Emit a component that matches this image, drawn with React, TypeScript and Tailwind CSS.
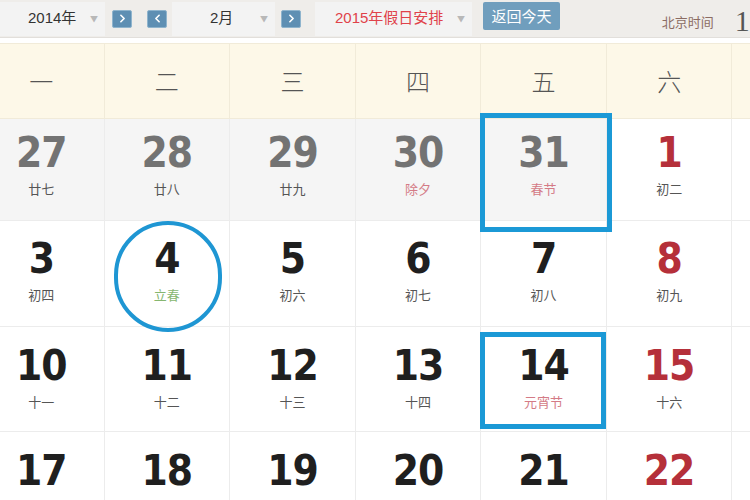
import { ChevronLeft, ChevronRight } from 'lucide-react';

type Day = {
  n: number;
  lunar: string;
  prev?: boolean;
  red?: boolean;
  fest?: 'red' | 'green';
  mark?: 'box' | 'boxLow' | 'circle';
};

const weeks: Day[][] = [
  [
    { n: 27, lunar: '廿七', prev: true },
    { n: 28, lunar: '廿八', prev: true },
    { n: 29, lunar: '廿九', prev: true },
    { n: 30, lunar: '除夕', prev: true, fest: 'red' },
    { n: 31, lunar: '春节', prev: true, fest: 'red', mark: 'box' },
    { n: 1, lunar: '初二', red: true },
    { n: 2, lunar: '初三', red: true },
  ],
  [
    { n: 3, lunar: '初四' },
    { n: 4, lunar: '立春', fest: 'green', mark: 'circle' },
    { n: 5, lunar: '初六' },
    { n: 6, lunar: '初七' },
    { n: 7, lunar: '初八' },
    { n: 8, lunar: '初九', red: true },
    { n: 9, lunar: '初十', red: true },
  ],
  [
    { n: 10, lunar: '十一' },
    { n: 11, lunar: '十二' },
    { n: 12, lunar: '十三' },
    { n: 13, lunar: '十四' },
    { n: 14, lunar: '元宵节', fest: 'red', mark: 'boxLow' },
    { n: 15, lunar: '十六', red: true },
    { n: 16, lunar: '十七', red: true },
  ],
  [
    { n: 17, lunar: '十八' },
    { n: 18, lunar: '十九' },
    { n: 19, lunar: '二十' },
    { n: 20, lunar: '廿一' },
    { n: 21, lunar: '廿二' },
    { n: 22, lunar: '廿三', red: true },
    { n: 23, lunar: '廿四', red: true },
  ],
];

const weekNames = ['一', '二', '三', '四', '五', '六', '日'];

// 每行高度与顶部留白
const rowStyles = ['h-[102px] pt-[14px]', 'h-[106px] pt-[18px]', 'h-[105px] pt-[19px]', 'h-[105px] pt-[19px]'];

const cjk = "font-['Noto_Sans_CJK_SC',sans-serif]";
const latin = "font-['Liberation_Sans','Noto_Sans_CJK_SC',sans-serif]";
const num = "font-['DejaVu_Sans_Condensed','DejaVu_Sans',sans-serif]";

const NavBtn = ({ dir }: { dir: 'l' | 'r' }) => (
  <button className="flex items-center justify-center w-[20px] h-[18px] rounded-[2px] bg-[#5e8fb3] border border-[#8fb4cd] text-white">
    {dir === 'l' ? <ChevronLeft size={13} strokeWidth={3} /> : <ChevronRight size={13} strokeWidth={3} />}
  </button>
);

const Caret = () => <span className="text-[8px] text-[#b8b8b8]">▼</span>;

const DayCell = ({ d, rowCls }: { d: Day; rowCls: string }) => {
  const numColor = d.prev ? 'text-[#737373]' : d.red ? 'text-[#b5303a]' : 'text-[#1f1f1f]';
  const lunarColor =
    d.fest === 'red' ? 'text-[#d47b86]' : d.fest === 'green' ? 'text-[#86b66f]' : 'text-[#555]';
  return (
    <div
      className={`relative ${rowCls} border-r border-b border-[#ececec] ${d.prev ? 'bg-[#f5f5f5]' : 'bg-white'} flex flex-col items-center`}
    >
      {d.mark === 'box' && (
        <div className="absolute z-10 -top-[6px] -left-[1px] -right-[6px] -bottom-[12px] border-[5px] border-[#1b99d6]" />
      )}
      {d.mark === 'boxLow' && (
        <div className="absolute z-10 top-[5px] -left-[1px] right-0 bottom-[2px] border-[5px] border-[#1b99d6]" />
      )}
      {d.mark === 'circle' && (
        <div className="absolute z-10 top-0 left-1/2 -translate-x-1/2 ml-[1px] w-[108px] h-[111px] rounded-full border-[4px] border-[#1e96d3]" />
      )}
      <div className={`${num} font-bold text-[42px] leading-[40px] tracking-[-1px] ${numColor}`}>{d.n}</div>
      <div className={`${cjk} text-[13px] leading-[20px] mt-[6px] ${lunarColor}`}>{d.lunar}</div>
    </div>
  );
};

export default function App() {
  return (
    <div className="w-[750px] h-[500px] overflow-hidden bg-white relative">
      {/* 工具栏 */}
      <div className={`${cjk} h-[38px] bg-[#efedea] border-b border-[#e2dfdb] flex items-center text-[15px] text-[#333]`}>
        <div className="w-[105px] h-[34px] bg-[#f3f3f3] flex items-center pl-[28px] pr-[7px] justify-between">
          <span className={latin}>2014年</span>
          <Caret />
        </div>
        <div className="ml-[7px]">
          <NavBtn dir="r" />
        </div>
        <div className="ml-[15px]">
          <NavBtn dir="l" />
        </div>
        <div className="ml-[5px] w-[103px] h-[34px] bg-[#f3f3f3] flex items-center pl-[38px] pr-[7px] justify-between">
          <span className={latin}>2月</span>
          <Caret />
        </div>
        <div className="ml-[6px]">
          <NavBtn dir="r" />
        </div>
        <div className="ml-[14px] w-[157px] h-[34px] bg-[#f3f3f3] flex items-center pl-[20px] pr-[7px] justify-between text-[#e0424a]">
          <span className={latin}>2015年假日安排</span>
          <Caret />
        </div>
        <button className="ml-[11px] w-[77px] h-[28px] -mt-[5px] rounded-[2px] bg-[#709ebd] text-white text-[15px]">
          返回今天
        </button>
        <div className="ml-auto flex items-center mr-[-53px]">
          <span className="text-[#8b6c63] text-[13px] mt-[6px]">北京时间</span>
          <span className="ml-[21px] font-['Liberation_Serif',serif] text-[30px] leading-none text-[#555] mt-[4px]">19:35</span>
        </div>
      </div>
      <div className="h-[5px] bg-white" />

      {/* 日历 */}
      <div className="ml-[-21px] w-[879px] grid grid-cols-7">
        {weekNames.map((w) => (
          <div
            key={w}
            className={`${cjk} h-[76px] bg-[#fdf8e8] border-t border-r border-b border-[#f1ebd9] flex items-center justify-center text-[24px] font-light text-[#555]`}
          >
            {w}
          </div>
        ))}
        {weeks.map((week, i) =>
          week.map((d) => <DayCell key={`${i}-${d.n}`} d={d} rowCls={rowStyles[i]} />)
        )}
      </div>
    </div>
  );
}
